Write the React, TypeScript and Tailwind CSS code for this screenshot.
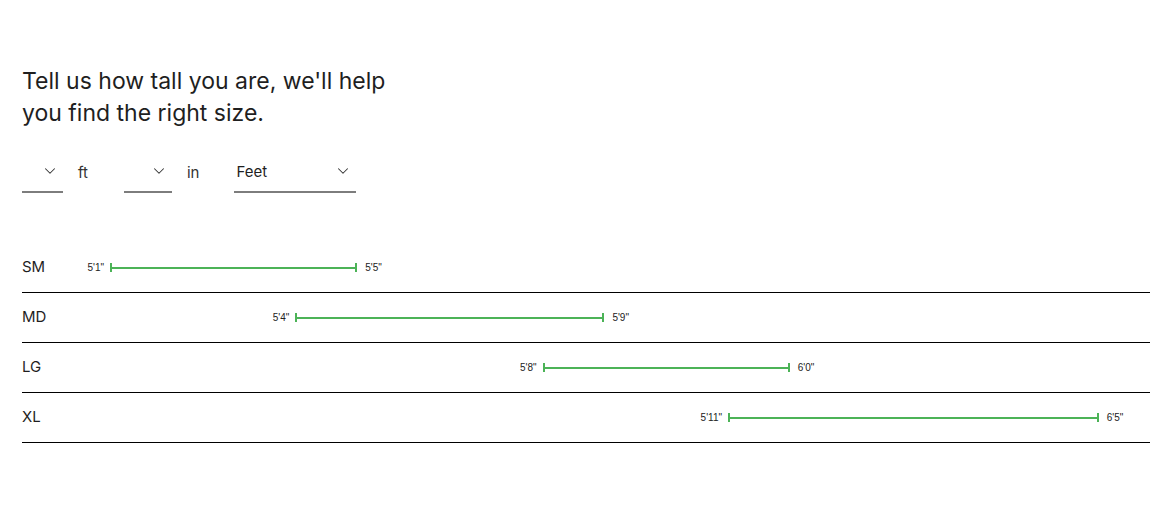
import { ChevronDown } from 'lucide-react'

const sizes = [
  { label: 'SM', min: "5'1\"", max: "5'5\"", from: 61, to: 65 },
  { label: 'MD', min: "5'4\"", max: "5'9\"", from: 64, to: 69 },
  { label: 'LG', min: "5'8\"", max: "6'0\"", from: 68, to: 72 },
  { label: 'XL', min: "5'11\"", max: "6'5\"", from: 71, to: 77 },
]

// pixel position of a height (inches) on the track, relative to the track start
const PX_PER_IN = 61.8
const pos = (h: number) => 88 + (h - 61) * PX_PER_IN

function Select({ width, value }: { width: string; value?: string }) {
  return (
    <div className={`flex items-start justify-between h-[38px] border-b-2 border-[#7d7d7d] pl-[2px] pr-[4px] pt-[7px] ${width}`}>
      <span className="text-[15px] leading-[20px] text-[#1f1f1f]">{value ?? ''}</span>
      <ChevronDown className="w-[18px] h-[18px] text-[#333]" strokeWidth={1.4} />
    </div>
  )
}

export default function App() {
  return (
    <div className="min-h-screen bg-white px-[22px] pt-[65px] font-['Inter',sans-serif] text-[#1f1f1f]">
      <h1 className="text-[23px] leading-[32px] w-[400px]">
        Tell us how tall you are, we'll help you find the right size.
      </h1>

      {/* Height inputs */}
      <div className="flex items-center mt-[26px] text-[15px]">
        <Select width="w-[41px]" />
        <span className="ml-[15px] mr-[36px] text-[#333] -mt-[1px]">ft</span>
        <Select width="w-[48px]" />
        <span className="ml-[15px] mr-[35px] text-[#333] -mt-[1px]">in</span>
        <Select width="w-[122px]" value="Feet" />
      </div>

      {/* Size chart */}
      <div className="mt-[50px] w-[1128px]">
        {sizes.map((s) => (
          <div key={s.label} className="flex items-center h-[50px] border-b border-black">
            <div className="relative flex-1 h-full flex items-center">
              <span className="absolute left-0 text-[15px] text-[#1f1f1f]">{s.label}</span>
              <div
                className="relative flex items-center h-[8px]"
                style={{ marginLeft: pos(s.from), width: pos(s.to) - pos(s.from) }}
              >
                <span className="absolute right-full mr-[6px] text-[10px] font-['Liberation_Sans',sans-serif] text-[#222] whitespace-nowrap">
                  {s.min}
                </span>
                <div className="w-[2px] h-[9px] bg-[#4cb357]" />
                <div className="flex-1 h-[2px] bg-[#4cb357]" />
                <div className="w-[2px] h-[9px] bg-[#4cb357]" />
                <span className="absolute left-full ml-[8px] text-[10px] font-['Liberation_Sans',sans-serif] text-[#222] whitespace-nowrap">
                  {s.max}
                </span>
              </div>
            </div>
          </div>
        ))}
      </div>
    </div>
  )
}
